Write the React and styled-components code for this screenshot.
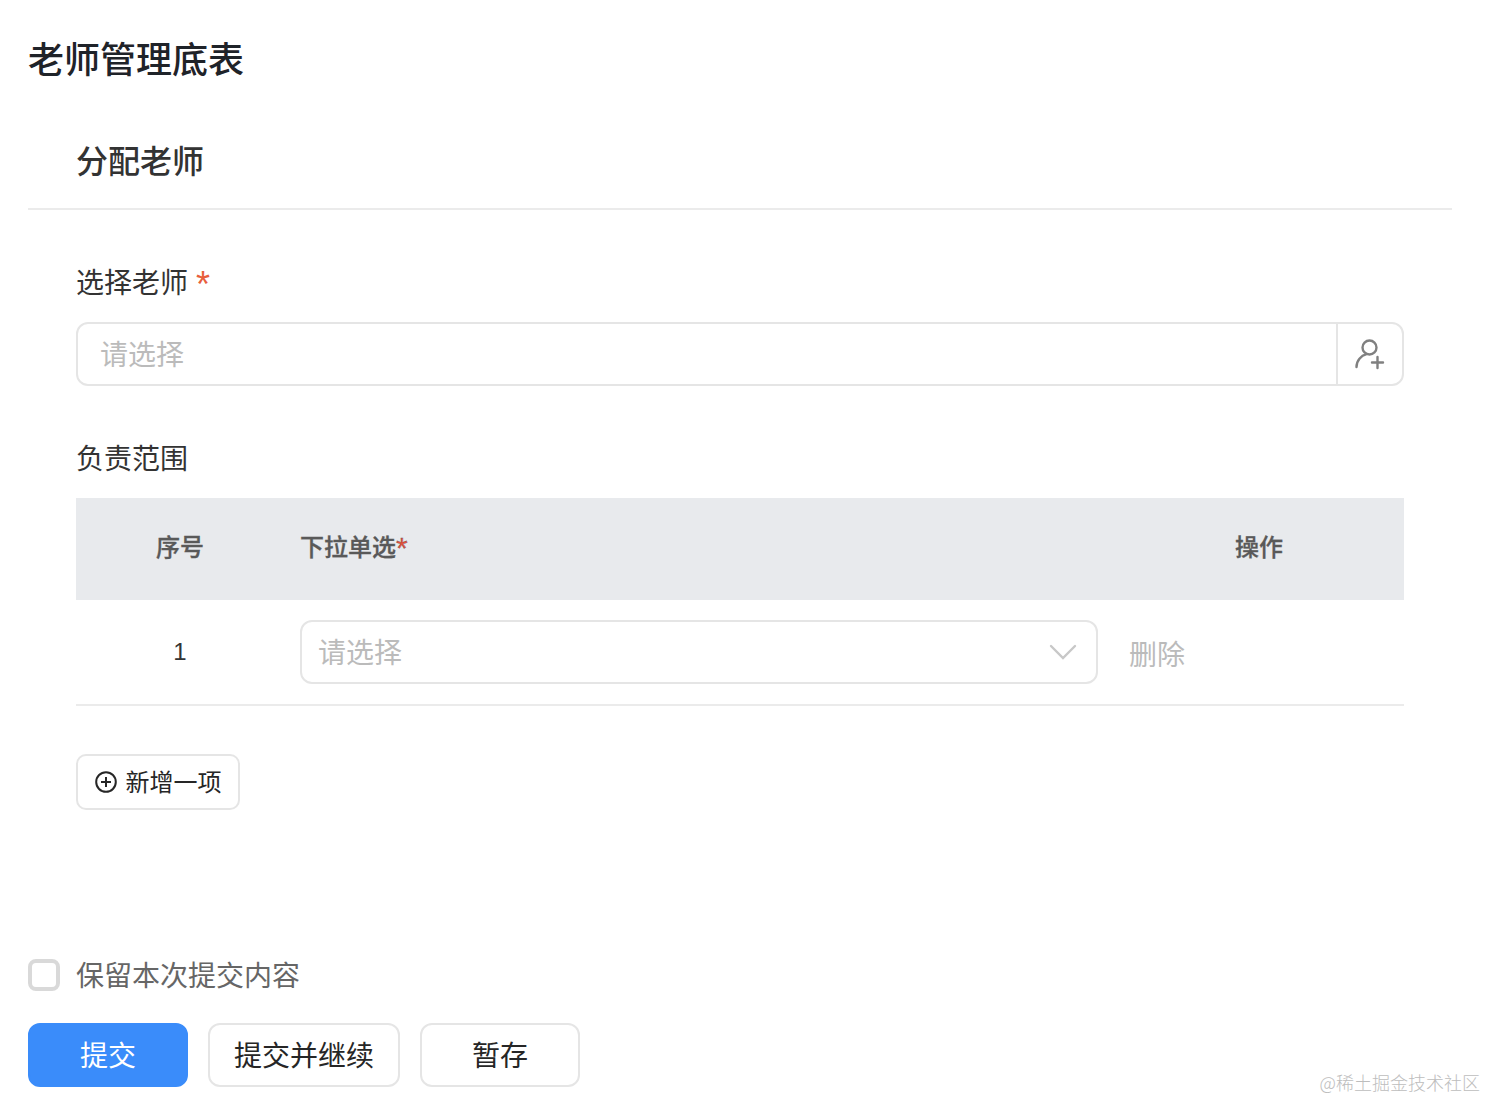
import React from "react";
import styled, { createGlobalStyle } from "styled-components";

const GlobalStyle = createGlobalStyle`
  html, body {
    margin: 0;
    padding: 0;
    background: #fff;
    font-family: "Liberation Sans", "Noto Sans CJK SC", sans-serif;
  }
  * { box-sizing: border-box; }
`;

const Page = styled.div`
  position: relative;
  width: 1486px;
  height: 1100px;
  padding: 0 34px 0 28px;
  overflow: hidden;
  display: flex;
  flex-direction: column;
`;

const Title = styled.h1`
  margin: 0;
  padding-top: 38px;
  height: 114px;
  font-size: 36px;
  line-height: 46px;
  font-weight: 500;
  color: #1f2329;
`;

const SectionHead = styled.div`
  height: 96px;
  padding: 0 48px;
  display: flex;
  align-items: flex-start;
  border-bottom: 2px solid #ebebeb;
`;

const SectionTitle = styled.h2`
  margin: 0;
  font-size: 32px;
  line-height: 96px;
  height: 94px;
  font-weight: 500;
  color: #333;
`;

const Body = styled.div`
  padding: 0 48px;
  display: flex;
  flex-direction: column;
`;

const Label = styled.div`
  font-size: 28px;
  line-height: 40px;
  color: #333;
  margin-top: ${(p) => p.$top}px;
  margin-bottom: ${(p) => p.$bottom}px;
`;

const Star = styled.span`
  color: ${(p) => p.$color};
  font-size: ${(p) => p.$size}px;
  line-height: 0;
  position: relative;
  top: ${(p) => p.$drop}px;
  margin-left: ${(p) => p.$gap || 0}px;
`;

const InputGroup = styled.div`
  height: 64px;
  display: flex;
  border: 2px solid #e5e5e5;
  border-radius: 12px;
`;

const Placeholder = styled.div`
  flex: 1;
  font-size: 28px;
  color: #bbb;
  padding-left: ${(p) => p.$left}px;
  padding-bottom: 2px;
  display: flex;
  align-items: center;
`;

const Addon = styled.div`
  width: 66px;
  border-left: 2px solid #e5e5e5;
  display: flex;
  align-items: center;
  justify-content: center;
`;

const HeadRow = styled.div`
  height: 102px;
  padding-bottom: 8px;
  background: #e8eaed;
  display: flex;
  align-items: center;
  font-size: 24px;
  font-weight: 500;
  color: #595959;
  -webkit-text-stroke: 0.3px #595959;
`;

const IndexCell = styled.div`
  width: 208px;
  text-align: center;
`;

const FieldCell = styled.div`
  width: 798px;
  margin-left: 16px;
`;

const ActionHead = styled.div`
  margin-left: 137px;
`;

const DataRow = styled.div`
  height: 106px;
  display: flex;
  align-items: center;
  border-bottom: 2px solid #ebebeb;
  font-size: 24px;
  color: #333;
`;

const SelectBox = styled.div`
  width: 798px;
  height: 64px;
  margin-left: 16px;
  border: 2px solid #e5e5e5;
  border-radius: 12px;
  display: flex;
  align-items: center;
  padding-right: 19px;
`;

const DeleteLink = styled.span`
  margin-left: 31px;
  font-size: 28px;
  color: #bbb;
  position: relative;
  top: 1px;
`;

const AddButton = styled.button`
  margin-top: 48px;
  width: 164px;
  height: 56px;
  padding: 0 0 4px;
  background: #fff;
  border: 2px solid #e5e5e5;
  border-radius: 10px;
  display: flex;
  align-items: center;
  justify-content: center;
  gap: 9px;
  font: inherit;
  font-size: 24px;
  color: #262626;
`;

const AddIconWrap = styled.span`
  display: flex;
  position: relative;
  top: 2px;
`;

const Footer = styled.div`
  margin-top: auto;
  padding-bottom: 13px;
  display: flex;
  flex-direction: column;
`;

const CheckRow = styled.label`
  display: flex;
  align-items: center;
  gap: 16px;
  height: 40px;
  font-size: 28px;
  color: #666;
`;

const CheckText = styled.span`
  position: relative;
  top: -1px;
`;

const CheckBox = styled.span`
  width: 32px;
  height: 32px;
  border: 4px solid #d9d9d9;
  border-radius: 8px;
  background: #fff;
`;

const ButtonRow = styled.div`
  display: flex;
  gap: 20px;
  margin-top: 28px;
`;

const ActionButton = styled.button`
  width: ${(p) => p.$width}px;
  height: 64px;
  padding: 0 0 2px;
  border-radius: 12px;
  font: inherit;
  font-size: 28px;
  color: ${(p) => (p.$primary ? "#fff" : "#262626")};
  background: ${(p) => (p.$primary ? "#3a8cfa" : "#fff")};
  border: 2px solid ${(p) => (p.$primary ? "#3a8cfa" : "#e5e5e5")};
`;

const Watermark = styled.div`
  position: absolute;
  right: 6px;
  bottom: 6px;
  font-family: "Noto Sans CJK SC", sans-serif;
  font-size: 18px;
  font-weight: 300;
  line-height: 24px;
  color: #bdbdbd;
`;

const UserPlusIcon = () => (
  <svg width="32" height="32" viewBox="0 0 32 32" fill="none" stroke="#808080" strokeWidth="2.4" strokeLinecap="round">
    <circle cx="15.5" cy="9.5" r="7" />
    <path d="M2.5 29c0-6.5 4.5-11.5 10-12.8" />
    <path d="M18 24.5h11M23.5 19v11" />
  </svg>
);

const ChevronIcon = () => (
  <svg style={{ marginLeft: "auto" }} width="28" height="18" viewBox="0 0 28 18" fill="none" stroke="#c8c8c8" strokeWidth="2.4" strokeLinecap="round">
    <path d="M2 3l12 12L26 3" />
  </svg>
);

const PlusCircleIcon = () => (
  <svg width="22" height="22" viewBox="0 0 22 22" fill="none" stroke="#262626" strokeWidth="2">
    <circle cx="11" cy="11" r="9.8" />
    <path d="M6 11h10M11 6v10" />
  </svg>
);

export default function App() {
  return (
    <Page>
      <GlobalStyle />
      <Title>老师管理底表</Title>
      <SectionHead>
        <SectionTitle>分配老师</SectionTitle>
      </SectionHead>
      <Body>
        <Label $top={54} $bottom={18}>
          选择老师<Star $color="#e8603c" $size={36} $drop={4} $gap={8}>*</Star>
        </Label>
        <InputGroup>
          <Placeholder $left={22}>请选择</Placeholder>
          <Addon>
            <UserPlusIcon />
          </Addon>
        </InputGroup>
        <Label $top={54} $bottom={18}>负责范围</Label>
        <HeadRow>
          <IndexCell>序号</IndexCell>
          <FieldCell>
            下拉单选<Star $color="#e8503c" $size={30} $drop={2}>*</Star>
          </FieldCell>
          <ActionHead>操作</ActionHead>
        </HeadRow>
        <DataRow>
          <IndexCell>1</IndexCell>
          <SelectBox>
            <Placeholder $left={16}>请选择</Placeholder>
            <ChevronIcon />
          </SelectBox>
          <DeleteLink>删除</DeleteLink>
        </DataRow>
        <AddButton>
          <AddIconWrap>
            <PlusCircleIcon />
          </AddIconWrap>
          新增一项
        </AddButton>
      </Body>
      <Footer>
        <CheckRow>
          <CheckBox />
          <CheckText>保留本次提交内容</CheckText>
        </CheckRow>
        <ButtonRow>
          <ActionButton $primary $width={160}>提交</ActionButton>
          <ActionButton $width={192}>提交并继续</ActionButton>
          <ActionButton $width={160}>暂存</ActionButton>
        </ButtonRow>
      </Footer>
      <Watermark>@稀土掘金技术社区</Watermark>
    </Page>
  );
}
